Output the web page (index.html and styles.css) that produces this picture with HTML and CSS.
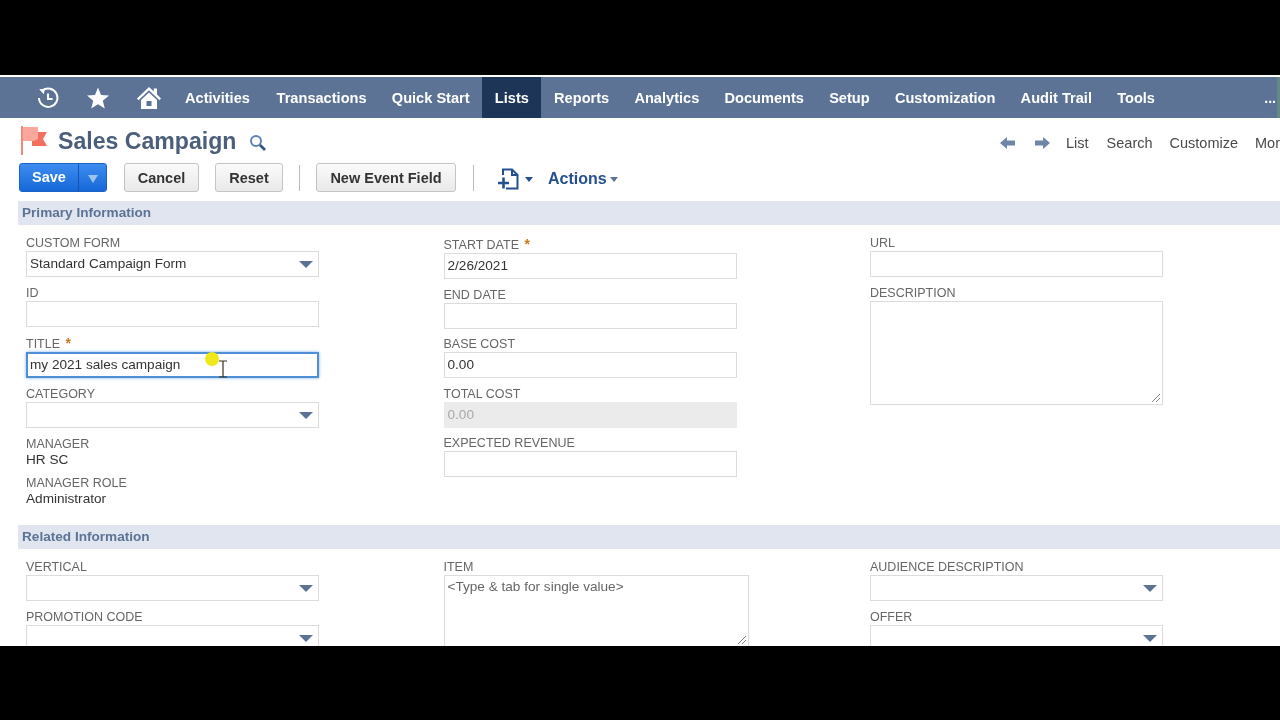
FILE: index.html
```html
<!DOCTYPE html>
<html lang="en">
<head>
<meta charset="utf-8">
<title>Sales Campaign</title>
<link rel="stylesheet" href="styles.css">
</head>
<body>
<div class="letterbox-top"></div>
<main class="screen">
  <nav class="nav">
    <div class="nav-icons">
      <svg class="ico-hist" width="24" height="24" viewBox="0 0 26 26" fill="none" stroke="#fff" stroke-width="2.2"><path d="M7 4.800A10 10 0 1 1 3.200 13"/><path d="M3.500 3.500 L9.500 3 L8.500 9 Z" fill="#fff" stroke="none"/><path d="M13 8v6h5"/></svg>
      <svg class="ico-star" width="24" height="24" viewBox="0 0 24 24" fill="#fff"><path d="M12 1.500l3 7.600 8 .5-6.200 5.100 2 7.900L12 18.300 5.200 22.600l2-7.900L1 9.600l8-.5z"/></svg>
      <svg class="ico-home" width="26" height="24" viewBox="0 0 26 24" fill="#fff"><path d="M13 1L1 12.500l1.500 1.700L13 4.300l10.500 9.900 1.500-1.700-4-3.900V2.500h-3.200v2.900z"/><path fill-rule="evenodd" d="M13 6.500l8 7.500v9H5v-9zM10.500 15v5h5v-5z"/></svg>
    </div>
    <a class="nav-item">Activities</a>
    <a class="nav-item">Transactions</a>
    <a class="nav-item">Quick Start</a>
    <a class="nav-item active">Lists</a>
    <a class="nav-item">Reports</a>
    <a class="nav-item">Analytics</a>
    <a class="nav-item">Documents</a>
    <a class="nav-item">Setup</a>
    <a class="nav-item">Customization</a>
    <a class="nav-item">Audit Trail</a>
    <a class="nav-item">Tools</a>
    <span class="nav-more">...</span>
  </nav>

  <header class="title-row">
    <svg class="flag" width="28" height="30" viewBox="0 0 28 30"><rect x="1" y="0" width="2" height="29" fill="#ef8a7c"/><path d="M12 6h15l-4 7 4 7H12z" fill="#f2705f"/><path d="M3 1h15v12l-4 2H3z" fill="#fba79b"/></svg>
    <h1 class="title">Sales Campaign</h1>
    <svg class="title-search" width="18" height="18" viewBox="0 0 18 18" fill="none"><circle cx="7" cy="7" r="5" stroke="#5b83b3" stroke-width="2"/><path d="M11 11l5 5" stroke="#2f5488" stroke-width="2.600"/></svg>
    <div class="page-links">
      <svg width="16" height="12" viewBox="0 0 16 12" fill="#6f86a8"><path d="M0 6l7-6v3.500h8v5H7V12z"/></svg>
      <svg class="fwd" width="16" height="12" viewBox="0 0 16 12" fill="#6f86a8"><path d="M16 6L9 0v3.500H1v5h8V12z"/></svg>
      <a class="page-link list">List</a>
      <a class="page-link">Search</a>
      <a class="page-link">Customize</a>
      <a class="page-link">More</a>
    </div>
  </header>

  <div class="toolbar">
    <div class="save-btn"><span class="save-main">Save</span><span class="save-arrow"></span></div>
    <button class="btn btn-cancel">Cancel</button>
    <button class="btn btn-reset">Reset</button>
    <span class="sep sep-a"></span>
    <button class="btn btn-event">New Event Field</button>
    <span class="sep sep-b"></span>
    <svg class="new-doc" width="24" height="22" viewBox="0 0 24 22" fill="none" stroke="#24508f" stroke-width="2"><path d="M6 7V1.500h9l5.500 5.500v13.500H9"/><path d="M15 1.500V7h5.500"/><path d="M1 15h11M6.500 9.500v11" stroke-width="2.600"/></svg>
    <span class="caret caret-blue"></span>
    <span class="actions">Actions</span>
    <span class="caret caret-grey"></span>
  </div>

  <h2 class="section">Primary Information</h2>
  <section class="fields fields-primary">
    <div class="col col-1">
      <div class="field"><label>CUSTOM FORM</label><div class="input select">Standard Campaign Form</div></div>
      <div class="field"><label>ID</label><div class="input"></div></div>
      <div class="field"><label>TITLE <b class="req">*</b></label><div class="input focus">my 2021 sales campaign</div></div>
      <div class="field"><label>CATEGORY</label><div class="input select"></div></div>
      <div class="static"><label>MANAGER</label><p>HR SC</p></div>
      <div class="static"><label>MANAGER ROLE</label><p>Administrator</p></div>
    </div>
    <div class="col col-2">
      <div class="field"><label>START DATE <b class="req">*</b></label><div class="input">2/26/2021</div></div>
      <div class="field"><label>END DATE</label><div class="input"></div></div>
      <div class="field"><label>BASE COST</label><div class="input">0.00</div></div>
      <div class="field"><label>TOTAL COST</label><div class="input disabled">0.00</div></div>
      <div class="field"><label>EXPECTED REVENUE</label><div class="input"></div></div>
    </div>
    <div class="col col-3">
      <div class="field"><label>URL</label><div class="input"></div></div>
      <div class="field"><label>DESCRIPTION</label><div class="input area"><svg class="grip" width="10" height="10" viewBox="0 0 10 10" stroke="#888" fill="none"><path d="M1 9l8-8M5 9l4-4"/></svg></div></div>
    </div>
  </section>

  <h2 class="section">Related Information</h2>
  <section class="fields fields-related">
    <div class="col col-1">
      <div class="field"><label>VERTICAL</label><div class="input select"></div></div>
      <div class="field"><label>PROMOTION CODE</label><div class="input select"></div></div>
    </div>
    <div class="col col-2">
      <div class="field"><label>ITEM</label><div class="input item-area">&lt;Type &amp; tab for single value&gt;<svg class="grip" width="10" height="10" viewBox="0 0 10 10" stroke="#888" fill="none"><path d="M1 9l8-8M5 9l4-4"/></svg></div></div>
    </div>
    <div class="col col-3">
      <div class="field"><label>AUDIENCE DESCRIPTION</label><div class="input select"></div></div>
      <div class="field"><label>OFFER</label><div class="input select"></div></div>
    </div>
  </section>

  <span class="pointer-dot"></span>
  <svg class="ibeam" width="10" height="18" viewBox="0 0 10 18" fill="none" stroke="#3a3020" stroke-width="1.200"><path d="M1 1h8M5 1v16M1 17h8"/></svg>
</main>
</body>
</html>
```
FILE: styles.css
```css
* { box-sizing: border-box; }
html, body { margin: 0; height: 720px; overflow: hidden; background: #000; }
body { font-family: "Liberation Sans", Arial, sans-serif; color: #333; }
.letterbox-top { height: 75px; background: #000; }
.screen { position: relative; height: 571px; background: #fff; overflow: hidden; padding-top: 2px; filter: blur(0.3px); }

.nav { height: 41px; background: #5c7396; display: flex; align-items: stretch; padding-left: 36px; border-right: 3px solid #658a86; }
.nav-icons { display: flex; align-items: center; width: 136.400px; }
.ico-hist { margin-right: 27px; flex: none; }
.ico-star { margin-right: 27px; flex: none; margin-left: -1px; }
.ico-home { flex: none; margin-left: -1px; }
.nav-item { display: flex; align-items: center; padding: 0 12.600px; color: #fff; font-size: 14.600px; font-weight: 700; white-space: nowrap; }
.nav-item:first-of-type { padding-right: 14.100px; }
.nav-item.active { background: #1d3557; }
.nav-more { margin-left: auto; color: #fff; font-weight: 700; font-size: 14px; padding-right: 1px; align-self: center; }

.title-row { position: relative; height: 41px; display: flex; align-items: center; padding: 5px 0 0 20px; }
.flag { flex: none; }
.title { margin: 0 0 0 10px; font-size: 23.100px; font-weight: 700; color: #4b5f7b; white-space: nowrap; }
.title-search { margin: 3px 0 0 13px; }
.page-links { position: absolute; left: 1000px; top: 17px; display: flex; align-items: center; white-space: nowrap; }
.page-links .fwd { margin-left: 18px; }
.page-link { font-size: 14.500px; color: #4a4a4a; margin-left: 17px; }
.page-link.list { margin-left: 16px; padding-right: 1px; }

.toolbar { height: 42px; display: flex; align-items: flex-start; padding: 4px 0 0 19px; }
.save-btn { display: flex; width: 88px; height: 29px; border-radius: 3px; overflow: hidden; background: linear-gradient(#3d8cf0, #1668d8); border: 1px solid #1a62c4; }
.save-main { width: 59px; color: #fff; font-weight: 700; font-size: 14.500px; text-align: center; line-height: 26px; border-right: 1px solid #1554ac; }
.save-arrow { flex: 1; position: relative; }
.save-arrow::after { content: ""; position: absolute; left: 9px; top: 11px; border: 5px solid transparent; border-top: 8px solid #9fc3ee; border-bottom: 0; }
.btn { height: 29px; border: 1px solid #c4c4c4; border-radius: 3px; background: linear-gradient(#fafafa, #e9e9e9); color: #333; font: 700 14.500px "Liberation Sans", Arial, sans-serif; padding: 0; }
.btn-cancel { width: 75px; margin-left: 17px; }
.btn-reset { width: 68px; margin-left: 16px; }
.btn-event { width: 140px; margin-left: 16px; }
.sep { width: 1px; height: 26px; margin-top: 2px; background: #bbb; }
.sep-a { margin-left: 16px; }
.sep-b { margin-left: 17px; }
.new-doc { margin-left: 23px; margin-top: 5px; }
.caret { width: 0; height: 0; border: 4.500px solid transparent; border-bottom: 0; border-top: 5px solid #24508f; margin-top: 14px; }
.caret-blue { margin-left: 4px; }
.actions { margin: 7px 0 0 15px; color: #24508f; font-size: 16px; font-weight: 700; }
.caret-grey { margin-left: 3px; border-top-color: #5c7396; }

.section { margin: 0 0 0 18px; height: 24px; background: #e0e5ef; color: #5c7396; font-size: 13.600px; font-weight: 700; line-height: 23px; padding-left: 4px; }

.fields { display: flex; padding-left: 26px; }
.fields-primary { height: 300px; }
.col { width: 293px; flex: none; padding-top: 10px; }
.col-2 { margin-left: 124.500px; }
.col-3 { margin-left: 133.500px; }
.fields-primary .col-2 { padding-top: 12px; }
.field { height: 50.330px; }
.col-2 .field { height: 49.600px; }
.fields-related .field { height: 50px; }
label { display: block; height: 16px; font-size: 12.500px; line-height: 16px; color: #666; white-space: nowrap; }
.req { color: #c77b22; font-size: 14px; line-height: 0; margin-left: 2px; }
.input { position: relative; height: 26px; border: 1px solid #dcdcdc; background: #fff; font-size: 13.600px; line-height: 24px; padding-left: 3px; color: #333; white-space: nowrap; }
.select::after { content: ""; position: absolute; right: 5px; top: 9px; border: 7px solid transparent; border-bottom: 0; border-top: 7px solid #5c7396; }
.focus { border: 2px solid #4f8fd6; line-height: 22px; padding-left: 2px; box-shadow: 0 0 3px #7fb0e6; }
.disabled { background: #ebebeb; border-color: #ebebeb; color: #a9a9a9; }
.area { height: 104px; }
.item-area { height: 72px; width: 305px; color: #666; line-height: 22px; }
.grip { position: absolute; right: 1px; bottom: 1px; }
.static { height: 39px; }
.static p { margin: 0; font-size: 13.600px; line-height: 16px; color: #333; }

.pointer-dot { position: absolute; left: 205px; top: 277px; width: 14px; height: 14px; border-radius: 50%; background: #f0e81a; }
.ibeam { position: absolute; left: 218px; top: 285px; }
```
